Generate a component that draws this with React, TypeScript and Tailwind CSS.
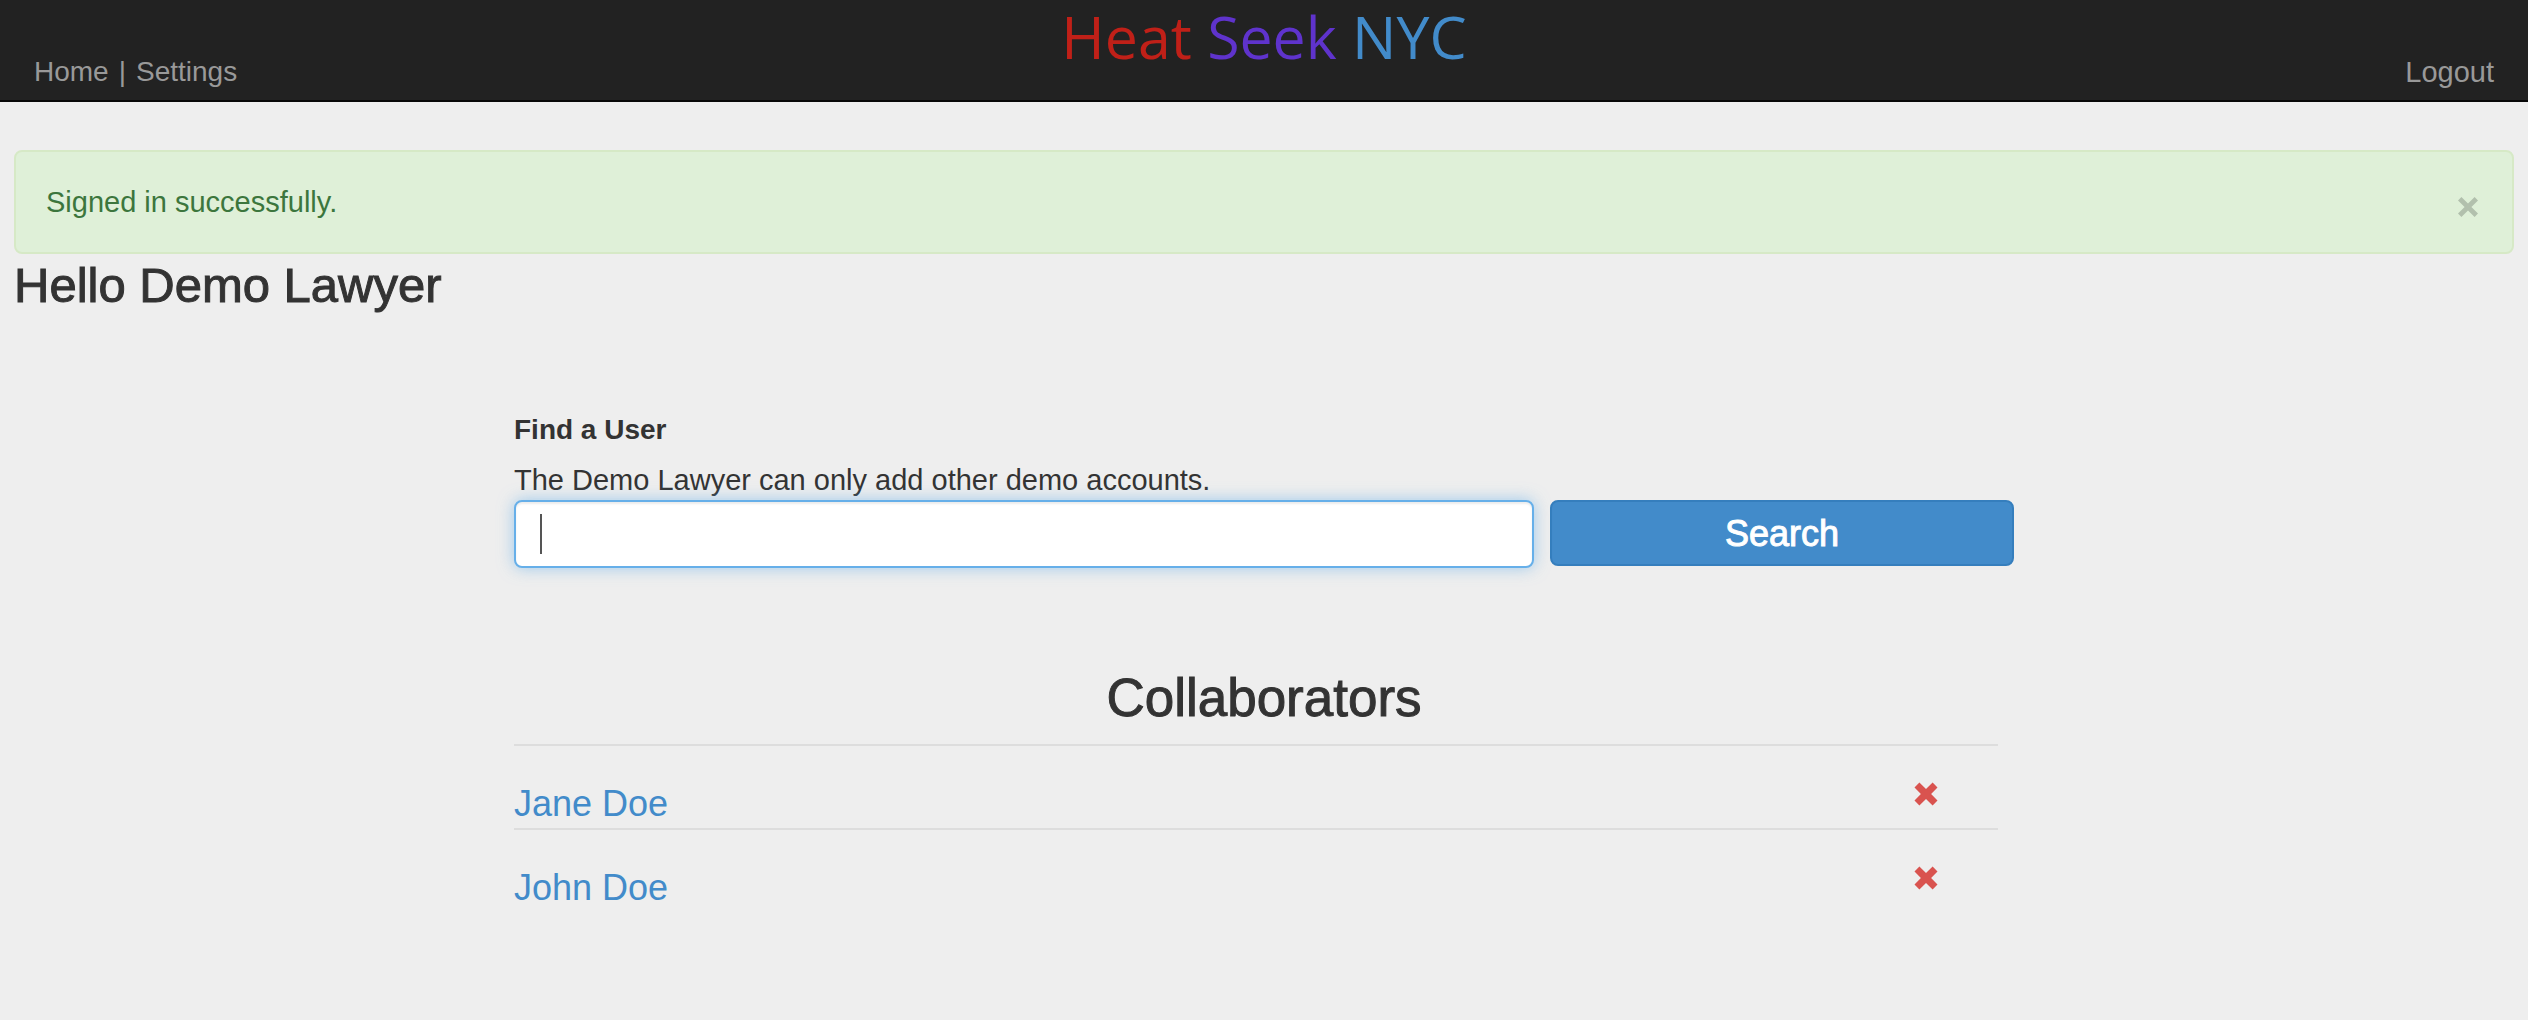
import React from "react";

const collaborators = ["Jane Doe", "John Doe"];

function CrossIcon() {
  return (
    <svg viewBox="0 0 24 24" className="size-6" fill="#d9534f" aria-hidden="true">
      <path d="M5.4 0.5 12 6.9 18.6 0.5 23.5 5.4 17.1 12 23.5 18.6 18.6 23.5 12 17.1 5.4 23.5 0.5 18.6 6.9 12 0.5 5.4Z" />
    </svg>
  );
}

function NavBar() {
  return (
    <header className="grid h-[102px] grid-cols-3 border-b-2 border-[#080808] bg-[#222] px-[34px]">
      <nav className="flex items-end gap-[10px] pb-2 text-[28px] text-[#999]">
        <a href="#home">Home</a>
        <span>|</span>
        <a href="#settings">Settings</a>
      </nav>
      <a
        href="#top"
        className="self-start justify-self-center whitespace-nowrap font-['Open_Sans',sans-serif] text-[59px] leading-[72px]"
      >
        <span className="text-[#c02018]">Heat</span> <span className="text-[#5f33cc]">Seek</span>{" "}
        <span className="text-[#428bca]">NYC</span>
      </a>
      <div className="flex items-end justify-end pb-2 text-[#999]">
        <a href="#logout">Logout</a>
      </div>
    </header>
  );
}

function Alert() {
  return (
    <div
      role="alert"
      className="flex items-center justify-between rounded-lg border-2 border-[#d6e9c6] bg-[#dff0d8] py-[30px] pr-7 pl-[30px] text-[#3c763d]"
    >
      <p>Signed in successfully.</p>
      <button type="button" aria-label="Close" className="flex size-8 items-end justify-center pb-px">
        <svg viewBox="0 0 20 20" className="size-5" fill="#b2c0ad" aria-hidden="true">
          <path d="M3.4 0 10 6.6 16.6 0 20 3.4 13.4 10 20 16.6 16.6 20 10 13.4 3.4 20 0 16.6 6.6 10 0 3.4Z" />
        </svg>
      </button>
    </div>
  );
}

function SearchForm() {
  return (
    <form onSubmit={(e) => e.preventDefault()}>
      <label htmlFor="user-search" className="mb-[10px] block text-[28px] font-bold">
        Find a User
      </label>
      <p>The Demo Lawyer can only add other demo accounts.</p>
      <div className="flex items-start gap-4">
        <div className="relative w-[68%]">
          <input
            id="user-search"
            type="text"
            className="block h-[68px] w-full rounded-lg border-2 border-[#66afe9] bg-white px-6 text-[36px] text-[#555] caret-transparent shadow-[inset_0_2px_2px_rgba(0,0,0,0.075),0_0_16px_rgba(102,175,233,0.6)] outline-none"
          />
          <span className="pointer-events-none absolute top-[14px] left-[26px] h-10 w-[2px] bg-[#555]" />
        </div>
        <button
          type="submit"
          className="h-[66px] flex-1 rounded-lg border-2 border-[#357ebd] bg-[#428bca] pt-[2px] text-[36px] text-white [-webkit-text-stroke:1px_white]"
        >
          Search
        </button>
      </div>
    </form>
  );
}

function Collaborators() {
  return (
    <section className="mt-[100px]">
      <h2 className="text-center text-[53px] leading-[60px] [-webkit-text-stroke:1px_#333]">Collaborators</h2>
      <ul className="mt-4 mr-4">
        {collaborators.map((name) => (
          <li
            key={name}
            className="flex items-start justify-between border-t-2 border-[#ddd] pt-9 pr-[60px] pb-[2px] text-[36px]"
          >
            <a href="#user" className="leading-[44px] text-[#428bca]">
              {name}
            </a>
            <button type="button" aria-label={`Remove ${name}`}>
              <CrossIcon />
            </button>
          </li>
        ))}
      </ul>
    </section>
  );
}

export default function App() {
  return (
    <div className="min-h-screen bg-[#eee] font-['Liberation_Sans',Arial,sans-serif] text-[29px] leading-[40px] text-[#333]">
      <NavBar />
      <main className="px-[14px] pt-12">
        <Alert />
        <h1 className="mt-1 text-[49px] leading-[54px] [-webkit-text-stroke:1px_#333]">Hello Demo Lawyer</h1>
        <div className="mx-auto mt-[98px] w-3/5">
          <SearchForm />
          <Collaborators />
        </div>
      </main>
    </div>
  );
}
